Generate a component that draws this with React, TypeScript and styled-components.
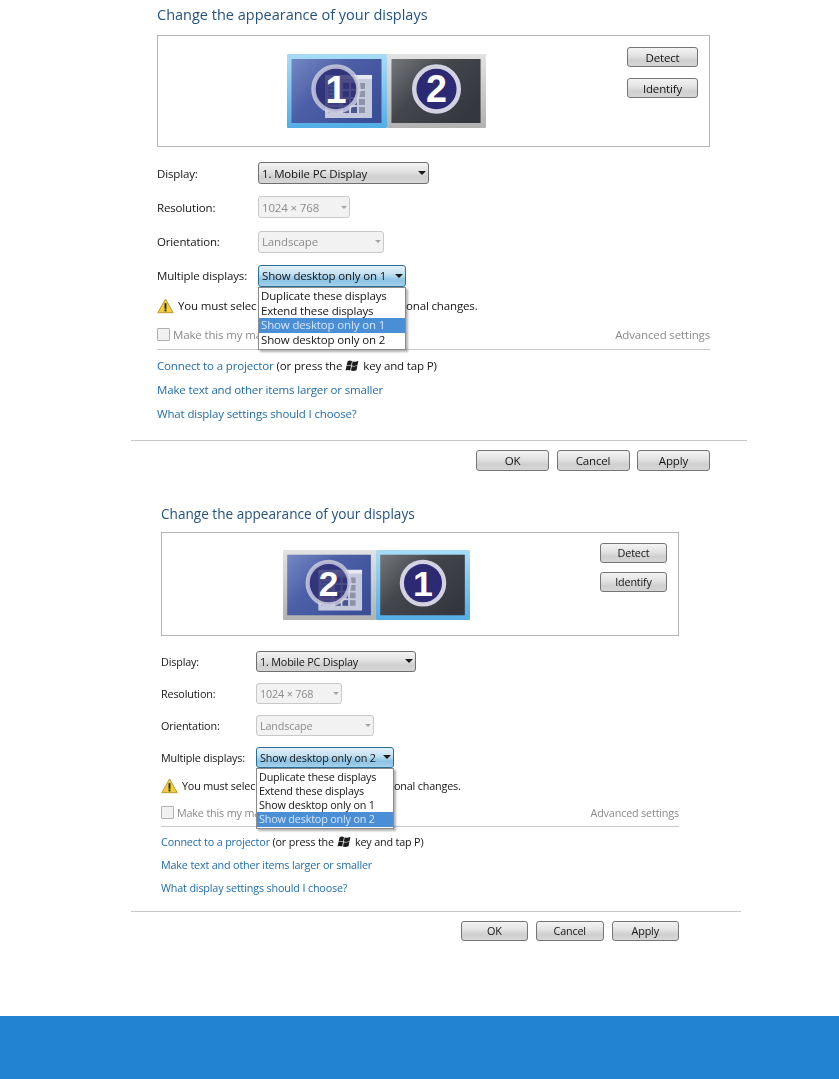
import * as React from 'react'
import styled, { createGlobalStyle, ThemeProvider } from 'styled-components'

const GlobalStyle = createGlobalStyle`
  html, body {
    margin: 0;
    padding: 0;
    background: #fff;
  }
  body {
    font-family: "Open Sans", "Noto Sans", "Liberation Sans", sans-serif;
    color: #141414;
  }
`

// the second dialog is the same picture, printed a bit smaller
const large = {
  font: 11.5,
  spacing: -0.15,
  title: 14.5,
  left: 157,
  width: 553,
  panelTop: 4,
  titleGap: 11,
  boxHeight: 112,
  boxPadLeft: 130,
  boxPadTop: 19,
  boxBtnTop: 12,
  btnWidth: 71,
  btnHeight: 20,
  btnGap: 11,
  formTop: 15,
  labelCol: 101,
  rowHeight: 22,
  rowGap: 12.3,
  multiWidth: 148,
  displayWidth: 171,
  resWidth: 92,
  orientWidth: 126,
  itemHeight: 14.7,
  noticeTop: 10,
  optionTop: 11,
  ruleTop: 5,
  linksTop: 7,
  linkHeight: 18,
  linkGap: 6,
  footTop: 17,
  footLeft: 131,
  footWidth: 616,
  actionsTop: 9,
  actionWidth: 73,
  actionHeight: 21,
  actionGap: 7.5,
}

const small = {
  font: 10.8,
  spacing: -0.17,
  title: 13.6,
  left: 161,
  width: 518,
  panelTop: 32,
  titleGap: 9,
  boxHeight: 104,
  boxPadLeft: 122,
  boxPadTop: 18,
  boxBtnTop: 11,
  btnWidth: 67,
  btnHeight: 20,
  btnGap: 9,
  formTop: 15,
  labelCol: 95,
  rowHeight: 21,
  rowGap: 11,
  multiWidth: 138,
  displayWidth: 160,
  resWidth: 86,
  orientWidth: 118,
  itemHeight: 14.2,
  noticeTop: 9,
  optionTop: 9,
  ruleTop: 4,
  linksTop: 7,
  linkHeight: 16,
  linkGap: 7,
  footTop: 15,
  footLeft: 131,
  footWidth: 610,
  actionsTop: 9,
  actionWidth: 67.5,
  actionHeight: 20,
  actionGap: 8,
}

const Sheet = styled.div`
  width: 839px;
  height: 1079px;
  display: flex;
  flex-direction: column;
  overflow: hidden;
`

const Panel = styled.section`
  padding-top: ${({ theme }) => theme.panelTop}px;
  font-size: ${({ theme }) => theme.font}px;
  letter-spacing: ${({ theme }) => theme.spacing}px;
  filter: blur(0.4px);
`

const Inner = styled.div`
  margin-left: ${({ theme }) => theme.left}px;
  width: ${({ theme }) => theme.width}px;
`

const Title = styled.h2`
  margin: 0 0 ${({ theme }) => theme.titleGap}px;
  height: 20px;
  line-height: 21px;
  font-size: ${({ theme }) => theme.title}px;
  font-weight: 400;
  letter-spacing: 0;
  color: #24527f;
  white-space: nowrap;
`

const DisplayBox = styled.div`
  height: ${({ theme }) => theme.boxHeight}px;
  box-sizing: border-box;
  border: 1px solid #b4b4b4;
  display: flex;
  justify-content: space-between;
  padding: ${({ theme }) => theme.boxPadTop - 1}px 11px 0 ${({ theme }) => theme.boxPadLeft - 1}px;
`

const Monitors = styled.div`
  display: flex;
`

const SideButtons = styled.div`
  display: flex;
  flex-direction: column;
  gap: ${({ theme }) => theme.btnGap}px;
  margin-top: ${({ theme }) => theme.boxBtnTop - theme.boxPadTop}px;
`

const Button = styled.button`
  box-sizing: border-box;
  width: ${({ theme }) => theme.btnWidth}px;
  height: ${({ theme }) => theme.btnHeight}px;
  padding: 0;
  border: 1px solid #757575;
  border-radius: 3px;
  background: linear-gradient(#f3f3f3 0%, #e4e4e4 40%, #cfcfcf 70%, #d6d6d6 100%);
  font-family: inherit;
  font-size: inherit;
  letter-spacing: inherit;
  color: #141414;
`

const ActionButton = styled(Button)`
  width: ${({ theme }) => theme.actionWidth}px;
  height: ${({ theme }) => theme.actionHeight}px;
`

const Form = styled.div`
  margin-top: ${({ theme }) => theme.formTop}px;
  display: flex;
  flex-direction: column;
  gap: ${({ theme }) => theme.rowGap}px;
`

const Row = styled.div`
  display: grid;
  grid-template-columns: ${({ theme }) => theme.labelCol}px auto;
  justify-content: start;
  align-items: center;
  height: ${({ theme }) => theme.rowHeight}px;
`

const Label = styled.span`
  white-space: nowrap;
`

const Select = styled.div<{ $width: string; $kind?: 'disabled' | 'focus' }>`
  position: relative;
  box-sizing: border-box;
  width: ${({ theme, $width }) => theme[$width]}px;
  height: ${({ theme }) => theme.rowHeight}px;
  display: flex;
  align-items: center;
  justify-content: space-between;
  padding: 0 2px 0 3px;
  border-radius: 3px;
  border: 1px solid ${({ $kind }) => ($kind === 'disabled' ? '#c8c8c8' : $kind === 'focus' ? '#2a6d94' : '#6e6e6e')};
  background: ${({ $kind }) =>
    $kind === 'disabled'
      ? '#f2f2f2'
      : $kind === 'focus'
        ? 'linear-gradient(#e4f1f9 0%, #c4e0f1 40%, #8cc3e4 70%, #a4d0ea 100%)'
        : 'linear-gradient(#f3f3f3 0%, #e4e4e4 40%, #cfcfcf 70%, #d6d6d6 100%)'};
  color: ${({ $kind }) => ($kind === 'disabled' ? '#8c8c8c' : '#141414')};
  white-space: nowrap;
`

const Caret = styled.i<{ $muted?: boolean }>`
  width: 0;
  height: 0;
  border-left: ${({ $muted }) => ($muted ? 3.5 : 4)}px solid transparent;
  border-right: ${({ $muted }) => ($muted ? 3.5 : 4)}px solid transparent;
  border-top: ${({ $muted }) => ($muted ? 3 : 4)}px solid ${({ $muted }) => ($muted ? '#a4a4a4' : '#1a1a1a')};
`

const Menu = styled.ul`
  position: absolute;
  z-index: 2;
  top: calc(100% + 1px);
  left: -1px;
  right: -1px;
  margin: 0;
  padding: 1px 0;
  list-style: none;
  background: #fff;
  border: 1px solid #8a8a8a;
  box-shadow: 2px 2px 2px rgba(0, 0, 0, 0.3);
`

const MenuItem = styled.li<{ $active: boolean }>`
  height: ${({ theme }) => theme.itemHeight}px;
  line-height: ${({ theme }) => theme.itemHeight}px;
  padding-left: 2px;
  background: ${({ $active }) => ($active ? '#4a8fd6' : 'transparent')};
  color: ${({ $active }) => ($active ? '#d6e6f6' : '#141414')};
`

// the open menu hides the middle of this line, only its two ends can be read
const Notice = styled.div`
  margin-top: ${({ theme }) => theme.noticeTop}px;
  height: 18px;
  display: grid;
  grid-template-columns: ${({ theme }) => theme.labelCol + theme.multiWidth}px auto;
  justify-content: start;
  align-items: center;
  white-space: nowrap;
`

const NoticeStart = styled.span`
  display: flex;
  align-items: center;
  gap: 4px;
`

const OptionRow = styled.div`
  margin-top: ${({ theme }) => theme.optionTop}px;
  height: 18px;
  display: flex;
  align-items: center;
  white-space: nowrap;
  color: #8a8a8a;
`

const CheckBox = styled.span`
  box-sizing: border-box;
  width: 13px;
  height: 13px;
  margin-right: 3px;
  border: 1px solid #b0b0b0;
  border-radius: 1px;
  background: #f1f1f1;
`

const AdvancedLink = styled.span`
  margin-left: auto;
`

const Rule = styled.hr`
  margin: ${({ theme }) => theme.ruleTop}px 0 0;
  border: 0;
  height: 1px;
  background: #c8c8c8;
`

const Links = styled.div`
  margin-top: ${({ theme }) => theme.linksTop}px;
  display: flex;
  flex-direction: column;
  gap: ${({ theme }) => theme.linkGap}px;
`

const LinkLine = styled.div`
  height: ${({ theme }) => theme.linkHeight}px;
  line-height: ${({ theme }) => theme.linkHeight}px;
  white-space: nowrap;
`

const TextLink = styled.a`
  color: #1f6ba6;
`

const FootRule = styled.hr`
  margin: ${({ theme }) => theme.footTop}px 0 0 ${({ theme }) => theme.footLeft}px;
  width: ${({ theme }) => theme.footWidth}px;
  border: 0;
  height: 1px;
  background: #c8c8c8;
`

const Actions = styled.div`
  margin-top: ${({ theme }) => theme.actionsTop}px;
  display: flex;
  justify-content: flex-end;
  gap: ${({ theme }) => theme.actionGap}px;
`

const Band = styled.div`
  margin-top: auto;
  height: 63px;
  background: #2183d1;
`

const WinKey = styled.svg`
  vertical-align: -2px;
  margin: 0 4px 0 3px;
`

const MonitorNumber = styled.text`
  font-family: "Liberation Sans", Arial, sans-serif;
  font-weight: 700;
  font-size: 38px;
  letter-spacing: 0;
  fill: #fff;
`

interface MonitorProps {
  number: string
  selected?: boolean
  desktop?: boolean
  width: number
  height: number
}

// one screen of the arrangement picture, the blue one carries the desktop window
const Monitor: React.FC<MonitorProps> = ({ number, selected, desktop, width, height }) => {
  const id = `m${number}${desktop ? 'd' : ''}`
  const cx = desktop ? 49 : 50
  return (
    <svg width={width} height={height} viewBox="0 0 100 74" preserveAspectRatio="none">
      <defs>
        <linearGradient id={`${id}f`} x1="0" y1="0" x2="0" y2="1">
          <stop offset="0" stopColor={selected ? '#a8dcf6' : '#e2e2e2'} />
          <stop offset="1" stopColor={selected ? '#52aee6' : '#b2b2b2'} />
        </linearGradient>
        <linearGradient id={`${id}s`} x1="0" y1="0" x2="1" y2="0.7">
          <stop offset="0" stopColor={desktop ? '#7488c4' : '#74777a'} />
          <stop offset="0.45" stopColor={desktop ? '#4c5fa6' : '#43464b'} />
          <stop offset="1" stopColor={desktop ? '#3b4f99' : '#34373e'} />
        </linearGradient>
      </defs>
      <rect x="0" y="0" width="100" height="74" rx="1" fill={`url(#${id}f)`} />
      <rect x="4.5" y="5" width="90" height="64" fill={`url(#${id}s)`} />
      {desktop && (
        <g>
          <rect x="38" y="21" width="47" height="43" fill="#c4c9dc" />
          <rect x="38" y="21" width="47" height="4" fill="#e6e8f0" />
          {[0, 1, 2, 3].map((r) =>
            [0, 1, 2].map((c) => (
              <rect key={`${r}${c}`} x={56 + c * 8} y={29 + r * 8} width="6" height="6" fill={c === 2 ? '#8d93a8' : '#4b5690'} />
            )),
          )}
          {[29, 33, 37, 41, 45, 49, 53, 57].map((y) => (
            <rect key={y} x="41" y={y} width="11" height="2" fill="#8d93b8" />
          ))}
        </g>
      )}
      <circle cx={cx} cy="35" r="22.5" fill="#2b2a72" fillOpacity={desktop ? 0.8 : 1} stroke="#d2d2e2" strokeOpacity={desktop ? 0.8 : 1} strokeWidth="4.5" />
      <MonitorNumber x={cx} y="48.5" textAnchor="middle">{number}</MonitorNumber>
    </svg>
  )
}

const WarningIcon = () => (
  <svg width="17" height="16" viewBox="0 0 18 17">
    <path d="M9 1 L17.2 15.6 H0.8 Z" fill="#f0ce3c" stroke="#b59a2a" strokeLinejoin="round" />
    <rect x="8" y="5.5" width="2" height="6" fill="#222" />
    <rect x="8" y="12.2" width="2" height="2" fill="#222" />
  </svg>
)

const WindowsLogo = () => (
  <WinKey width="14" height="12" viewBox="0 0 14 12">
    <path d="M2.6 1.2 Q4.7 0 7 1 L6.2 5.4 Q3.9 4.5 1.6 5.4 Z" fill="#1c1c1c" />
    <path d="M7.6 1.2 Q10 2.4 13.4 0.8 L12.5 5.2 Q9.5 6.4 6.9 5.6 Z" fill="#1c1c1c" />
    <path d="M1.5 6 Q3.7 5.2 6 6 L5.2 10.4 Q3 9.4 0.6 10.4 Z" fill="#1c1c1c" />
    <path d="M6.8 6.2 Q9.4 7.1 12.4 5.8 L11.5 10.2 Q8.6 11.4 6 10.6 Z" fill="#1c1c1c" />
  </WinKey>
)

const menuItems = ['Duplicate these displays', 'Extend these displays', 'Show desktop only on 1', 'Show desktop only on 2']

interface DialogProps {
  theme: typeof large
  monitors: MonitorProps[]
  active: number
}

const Dialog: React.FC<DialogProps> = ({ theme, monitors, active }) => (
  <ThemeProvider theme={theme}>
    <Panel>
      <Inner>
        <Title>Change the appearance of your displays</Title>
        <DisplayBox>
          <Monitors>
            {monitors.map((m) => (
              <Monitor key={m.number} {...m} />
            ))}
          </Monitors>
          <SideButtons>
            <Button>Detect</Button>
            <Button>Identify</Button>
          </SideButtons>
        </DisplayBox>
        <Form>
          <Row>
            <Label>Display:</Label>
            <Select $width="displayWidth">
              1. Mobile PC Display
              <Caret />
            </Select>
          </Row>
          <Row>
            <Label>Resolution:</Label>
            <Select $width="resWidth" $kind="disabled">
              1024 × 768
              <Caret $muted />
            </Select>
          </Row>
          <Row>
            <Label>Orientation:</Label>
            <Select $width="orientWidth" $kind="disabled">
              Landscape
              <Caret $muted />
            </Select>
          </Row>
          <Row>
            <Label>Multiple displays:</Label>
            <Select $width="multiWidth" $kind="focus">
              {menuItems[active]}
              <Caret />
              <Menu>
                {menuItems.map((item, i) => (
                  <MenuItem key={item} $active={i === active}>
                    {item}
                  </MenuItem>
                ))}
              </Menu>
            </Select>
          </Row>
        </Form>
        <Notice>
          <NoticeStart>
            <WarningIcon />
            You must selec
          </NoticeStart>
          <span>onal changes.</span>
        </Notice>
        <OptionRow>
          <CheckBox />
          Make this my ma
          <AdvancedLink>Advanced settings</AdvancedLink>
        </OptionRow>
        <Rule />
        <Links>
          <LinkLine>
            <TextLink>Connect to a projector</TextLink> (or press the
            <WindowsLogo />
            key and tap P)
          </LinkLine>
          <LinkLine>
            <TextLink>Make text and other items larger or smaller</TextLink>
          </LinkLine>
          <LinkLine>
            <TextLink>What display settings should I choose?</TextLink>
          </LinkLine>
        </Links>
      </Inner>
      <FootRule />
      <Inner>
        <Actions>
          <ActionButton>OK</ActionButton>
          <ActionButton>Cancel</ActionButton>
          <ActionButton>Apply</ActionButton>
        </Actions>
      </Inner>
    </Panel>
  </ThemeProvider>
)

export default function App() {
  return (
    <Sheet>
      <GlobalStyle />
      <Dialog
        theme={large}
        active={2}
        monitors={[
          { number: '1', selected: true, desktop: true, width: 100, height: 74 },
          { number: '2', width: 99, height: 74 },
        ]}
      />
      <Dialog
        theme={small}
        active={3}
        monitors={[
          { number: '2', desktop: true, width: 93, height: 70 },
          { number: '1', selected: true, width: 94, height: 70 },
        ]}
      />
      <Band />
    </Sheet>
  )
}
